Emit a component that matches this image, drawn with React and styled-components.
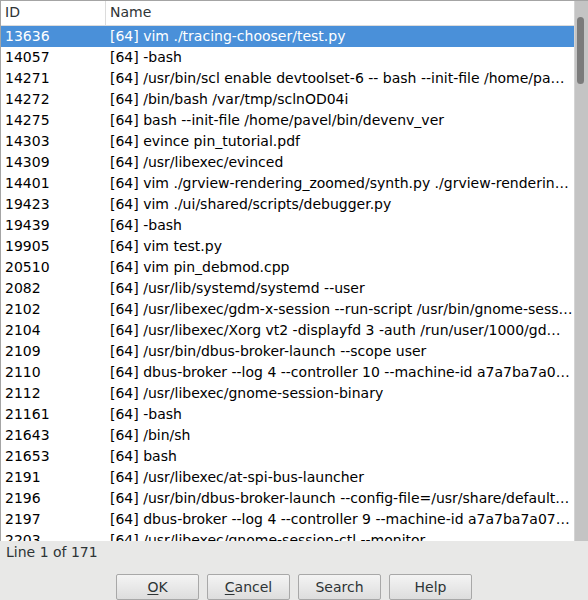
import React from 'react';
import styled, { createGlobalStyle } from 'styled-components';

const GlobalStyle = createGlobalStyle`
  html, body {
    margin: 0;
    padding: 0;
    background: #e8e8e7;
    font-family: "DejaVu Sans", "Noto Sans", sans-serif;
  }
`;

const rows = [
  ['13636', '[64] vim ./tracing-chooser/test.py'],
  ['14057', '[64] -bash'],
  ['14271', '[64] /usr/bin/scl enable devtoolset-6 -- bash --init-file /home/pa…'],
  ['14272', '[64] /bin/bash /var/tmp/sclnOD04i'],
  ['14275', '[64] bash --init-file /home/pavel/bin/devenv_ver'],
  ['14303', '[64] evince pin_tutorial.pdf'],
  ['14309', '[64] /usr/libexec/evinced'],
  ['14401', '[64] vim ./grview-rendering_zoomed/synth.py ./grview-renderin…'],
  ['19423', '[64] vim ./ui/shared/scripts/debugger.py'],
  ['19439', '[64] -bash'],
  ['19905', '[64] vim test.py'],
  ['20510', '[64] vim pin_debmod.cpp'],
  ['2082', '[64] /usr/lib/systemd/systemd --user'],
  ['2102', '[64] /usr/libexec/gdm-x-session --run-script /usr/bin/gnome-sess…'],
  ['2104', '[64] /usr/libexec/Xorg vt2 -displayfd 3 -auth /run/user/1000/gd…'],
  ['2109', '[64] /usr/bin/dbus-broker-launch --scope user'],
  ['2110', '[64] dbus-broker --log 4 --controller 10 --machine-id a7a7ba7a0…'],
  ['2112', '[64] /usr/libexec/gnome-session-binary'],
  ['21161', '[64] -bash'],
  ['21643', '[64] /bin/sh'],
  ['21653', '[64] bash'],
  ['2191', '[64] /usr/libexec/at-spi-bus-launcher'],
  ['2196', '[64] /usr/bin/dbus-broker-launch --config-file=/usr/share/default…'],
  ['2197', '[64] dbus-broker --log 4 --controller 9 --machine-id a7a7ba7a07…'],
  ['2203', '[64] /usr/libexec/gnome-session-ctl --monitor'],
];

const Window = styled.div`
  width: 588px;
  height: 600px;
  display: flex;
  flex-direction: column;
  background: #e8e8e7;
  overflow: hidden;
  font-size: 14px;
  color: #2e3436;
`;

const ListFrame = styled.div`
  height: 540px;
  display: flex;
  border-top: 1px solid #a4a4a4;
  border-left: 1px solid #a4a4a4;
  background: #fff;
`;

const ListArea = styled.div`
  flex: 1;
  overflow: hidden;
  display: flex;
  flex-direction: column;
`;

const HeaderRow = styled.div`
  display: flex;
  height: 24px;
  flex-shrink: 0;
  border-bottom: 1px solid #dcdcdc;
`;

const HeaderCell = styled.div`
  width: ${({ w }) => (w ? `${w}px` : 'auto')};
  flex: ${({ w }) => (w ? 'none' : 1)};
  display: flex;
  align-items: center;
  padding: 0 0 2px 4px;
  box-sizing: border-box;
  border-right: ${({ w }) => (w ? '1px solid #dcdcdc' : 'none')};
  color: #2e3436;
`;

const Row = styled.div`
  display: flex;
  height: 21px;
  flex-shrink: 0;
  align-items: center;
  padding-bottom: 2px;
  box-sizing: border-box;
  background: ${({ selected }) => (selected ? '#4a90d9' : '#fff')};
  color: ${({ selected }) => (selected ? '#fff' : '#000')};
`;

const Cell = styled.div`
  width: ${({ w }) => (w ? `${w}px` : 'auto')};
  flex: ${({ w }) => (w ? 'none' : 1)};
  padding-left: 4px;
  box-sizing: border-box;
  white-space: nowrap;
  overflow: hidden;
`;

const Scrollbar = styled.div`
  width: 14px;
  flex-shrink: 0;
  background: #c4c4c4;
  border-left: 1px solid #d4d4d4;
  box-sizing: border-box;
  padding: 16px 0 0 2px;
`;

const Thumb = styled.div`
  width: 7px;
  height: 67px;
  border-radius: 4px;
  background: #7b7b7b;
`;

const Status = styled.div`
  height: 22px;
  display: flex;
  align-items: center;
  padding-left: 6px;
  color: #2e3436;
`;

const ButtonBar = styled.div`
  display: flex;
  justify-content: center;
  gap: 8px;
  margin-top: 11px;
`;

const Button = styled.button`
  width: 83px;
  height: 26px;
  border: 1px solid #a8a8a8;
  border-radius: 2px;
  background: linear-gradient(#f4f4f4, #dddddd);
  font-family: inherit;
  font-size: 14px;
  color: #2e3436;
  padding: 0;
`;

const Key = styled.span`
  text-decoration: underline;
  text-underline-offset: 2px;
`;

export default function App() {
  return (
    <>
      <GlobalStyle />
      <Window>
        <ListFrame>
          <ListArea>
            <HeaderRow>
              <HeaderCell w={105}>ID</HeaderCell>
              <HeaderCell>Name</HeaderCell>
            </HeaderRow>
            {rows.map(([id, name], i) => (
              <Row key={id} selected={i === 0}>
                <Cell w={105}>{id}</Cell>
                <Cell>{name}</Cell>
              </Row>
            ))}
          </ListArea>
          <Scrollbar>
            <Thumb />
          </Scrollbar>
        </ListFrame>
        <Status>Line 1 of 171</Status>
        <ButtonBar>
          <Button><Key>O</Key>K</Button>
          <Button><Key>C</Key>ancel</Button>
          <Button>Search</Button>
          <Button>Help</Button>
        </ButtonBar>
      </Window>
    </>
  );
}
